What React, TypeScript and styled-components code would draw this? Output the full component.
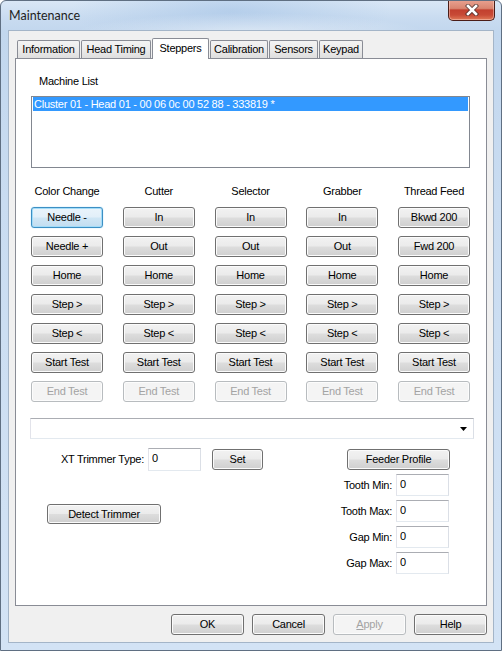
import React from "react";
import styled, { createGlobalStyle, css } from "styled-components";

const GlobalStyle = createGlobalStyle`
  html, body { margin: 0; padding: 0; background: #ffffff; }
  body {
    font-family: "Liberation Sans", Arial, sans-serif;
    font-size: 11px;
    letter-spacing: -0.25px;
    color: #000000;
  }
  * { box-sizing: border-box; }
`;

const Window = styled.div`
  width: 502px;
  height: 651px;
  border: 1px solid #5f6f82;
  border-radius: 6px 6px 0 0;
  overflow: hidden;
  display: flex;
  flex-direction: column;
  background:
    radial-gradient(ellipse 180px 22px at 250px 34px, rgba(255, 255, 255, 0.55), rgba(255, 255, 255, 0) 100%),
    radial-gradient(ellipse 160px 40px at 230px 10px, rgba(150, 185, 225, 0.45), rgba(150, 185, 225, 0) 100%),
    linear-gradient(180deg, #d9e7f6 0px, #c8dbf0 18px, #c2d7ee 30px, #c9dcf1 200px, #d3e3f5 100%);
`;

const TitleBar = styled.div`
  height: 29px;
  flex: none;
  display: flex;
  justify-content: space-between;
  align-items: flex-start;
`;

const Title = styled.div`
  padding: 7px 0 0 8px;
  font-family: "Lato", "Noto Sans", sans-serif;
  font-size: 12.5px;
  letter-spacing: 0;
  line-height: 16px;
  color: #1e1e1e;
`;

const CloseButton = styled.div`
  width: 47px;
  height: 21px;
  margin: -1px 6px 0 0;
  border: 1px solid #4a1d18;
  border-top: none;
  border-radius: 0 0 5px 5px;
  display: flex;
  align-items: center;
  justify-content: center;
  background: linear-gradient(180deg, #e9a291 0%, #d98570 42%, #c2402f 50%, #c84a36 75%, #e07a58 100%);
  box-shadow: inset 0 0 0 1px rgba(255, 220, 210, 0.45);
`;

const Client = styled.div`
  flex: none;
  height: 613px;
  margin: 0 7px;
  border: 1px solid #a4b5c8;
  background: #f0f0f0;
  padding: 7px 6px 7px 6px;
  display: flex;
  flex-direction: column;
`;

const TabStrip = styled.div`
  height: 20px;
  flex: none;
  display: flex;
  align-items: flex-end;
  gap: 1px;
  padding-left: 2px;
  position: relative;
  z-index: 1;
`;

const Tab = styled.div<{ $w: number; $active?: boolean }>`
  width: ${(p) => p.$w}px;
  height: 18px;
  border: 1px solid #898c95;
  border-bottom: none;
  border-radius: 2px 2px 0 0;
  background: linear-gradient(180deg, #f3f3f3 0%, #ebebeb 50%, #dedede 100%);
  display: flex;
  align-items: center;
  justify-content: center;
  line-height: 13px;
  white-space: nowrap;
  ${(p) =>
    p.$active &&
    css`
      height: 21px;
      margin-bottom: -1px;
      background: #ffffff;
      padding-bottom: 2px;
    `}
`;

const Panel = styled.div`
  height: 548px;
  flex: none;
  border: 1px solid #898c95;
  background: #ffffff;
  padding: 16px 16px 0 15px;
  display: flex;
  flex-direction: column;
`;

const ListLabel = styled.div`
  height: 13px;
  line-height: 13px;
  margin-left: 8px;
`;

const ListBox = styled.div`
  margin-top: 8px;
  height: 72px;
  border: 1px solid #828790;
  padding: 0 1px;
  background: #ffffff;
`;

const ListRow = styled.div<{ $selected?: boolean }>`
  height: 14px;
  line-height: 14px;
  padding-left: 1px;
  white-space: nowrap;
  ${(p) =>
    p.$selected &&
    css`
      background: #3399ff;
      color: #ffffff;
    `}
`;

const StepperGrid = styled.div`
  margin-top: 16px;
  display: grid;
  grid-template-columns: repeat(5, 72px);
  grid-template-rows: 15px repeat(7, 21px);
  grid-auto-flow: column;
  justify-content: space-between;
  row-gap: 8px;
`;

const ColumnLabel = styled.div`
  line-height: 15px;
  text-align: center;
  white-space: nowrap;
`;

type Variant = "normal" | "focused" | "disabled";

const Button = styled.div<{ $w?: number; $h?: number; $variant?: Variant }>`
  width: ${(p) => (p.$w ? `${p.$w}px` : "100%")};
  height: ${(p) => p.$h ?? 21}px;
  flex: none;
  border: 1px solid #707070;
  border-radius: 3px;
  background: linear-gradient(180deg, #f2f2f2 0%, #ebebeb 48%, #dddddd 52%, #cfcfcf 100%);
  box-shadow: inset 0 0 0 1px #fbfbfb;
  display: flex;
  align-items: center;
  justify-content: center;
  line-height: 13px;
  white-space: nowrap;
  color: #000000;
  ${(p) =>
    p.$variant === "focused" &&
    css`
      border-color: #3c8fc4;
      background: linear-gradient(180deg, #eaf4fb 0%, #e2eff9 48%, #cfe6f5 52%, #c2ddf0 100%);
      box-shadow: inset 0 0 0 1px #a3dcf8, 0 0 1px #5fc3f2;
    `}
  ${(p) =>
    p.$variant === "disabled" &&
    css`
      border-color: #b8bcbf;
      background: #f4f4f4;
      box-shadow: inset 0 0 0 1px #fcfcfc;
      color: #a3a3a3;
    `}
`;

const Combo = styled.div`
  margin: 16px -4px 0 -1px;
  height: 21px;
  flex: none;
  border: 1px solid;
  border-color: #abadb3 #dbdfe6 #e3e9ef #e2e3ea;
  background: #ffffff;
  display: flex;
  align-items: center;
  justify-content: flex-end;
  padding-right: 6px;
`;

const Lower = styled.div`
  margin-top: 9px;
  display: flex;
  justify-content: space-between;
  align-items: flex-start;
`;

const LeftCol = styled.div`
  display: flex;
  flex-direction: column;
`;

const XTRow = styled.div`
  display: flex;
  align-items: center;
`;

const XTLabel = styled.div`
  width: 113px;
  text-align: right;
  margin-right: 4px;
  white-space: nowrap;
  padding-bottom: 2px;
`;

const TextBox = styled.input<{ $h?: number }>`
  width: 53px;
  height: ${(p) => p.$h ?? 22}px;
  flex: none;
  border: 1px solid;
  border-color: #abadb3 #dbdfe6 #e3e9ef #e2e3ea;
  background: #ffffff;
  font: inherit;
  letter-spacing: inherit;
  color: #000000;
  padding: 0 3px 3px 3px;
  margin: 0;
  outline: none;
`;

const SetButton = styled(Button)`
  margin-left: 11px;
`;

const DetectButton = styled(Button)`
  margin: 33px 0 0 16px;
`;

const RightCol = styled.div`
  display: flex;
  flex-direction: column;
  align-items: flex-end;
  gap: 4px;
  padding-top: 1px;
  margin-right: 20px;
`;

const FieldRow = styled.div`
  display: flex;
  align-items: center;
  gap: 4px;
  margin-right: 1px;
`;

const FieldLabel = styled.div`
  white-space: nowrap;
  padding-bottom: 1px;
`;

const BottomBar = styled.div`
  margin-top: 8px;
  display: flex;
  justify-content: flex-end;
  gap: 8px;
`;

const Mnemonic = styled.span`
  text-decoration: underline;
`;

const columns: { title: string; buttons: string[] }[] = [
  { title: "Color Change", buttons: ["Needle -", "Needle +", "Home", "Step >", "Step <", "Start Test", "End Test"] },
  { title: "Cutter", buttons: ["In", "Out", "Home", "Step >", "Step <", "Start Test", "End Test"] },
  { title: "Selector", buttons: ["In", "Out", "Home", "Step >", "Step <", "Start Test", "End Test"] },
  { title: "Grabber", buttons: ["In", "Out", "Home", "Step >", "Step <", "Start Test", "End Test"] },
  { title: "Thread Feed", buttons: ["Bkwd 200", "Fwd 200", "Home", "Step >", "Step <", "Start Test", "End Test"] },
];

const tabs: { label: string; w: number; active?: boolean }[] = [
  { label: "Information", w: 63 },
  { label: "Head Timing", w: 70 },
  { label: "Steppers", w: 57, active: true },
  { label: "Calibration", w: 58 },
  { label: "Sensors", w: 49 },
  { label: "Keypad", w: 44 },
];

const fields = ["Tooth Min:", "Tooth Max:", "Gap Min:", "Gap Max:"];

export default function App() {
  return (
    <>
      <GlobalStyle />
      <Window>
        <TitleBar>
          <Title>Maintenance</Title>
          <CloseButton>
            <svg width="14" height="12" viewBox="0 0 14 12">
              <path d="M3 2 L11 10 M11 2 L3 10" stroke="#3a2a2a" strokeWidth="4.4" strokeLinecap="square" opacity="0.75" />
              <path d="M3 2 L11 10 M11 2 L3 10" stroke="#ffffff" strokeWidth="2.6" strokeLinecap="square" />
            </svg>
          </CloseButton>
        </TitleBar>
        <Client>
          <TabStrip>
            {tabs.map((t) => (
              <Tab key={t.label} $w={t.w} $active={t.active}>
                {t.label}
              </Tab>
            ))}
          </TabStrip>
          <Panel>
            <ListLabel>Machine List</ListLabel>
            <ListBox>
              <ListRow $selected>Cluster 01 - Head 01 - 00 06 0c 00 52 88 - 333819 *</ListRow>
            </ListBox>
            <StepperGrid>
              {columns.map((c, ci) => (
                <React.Fragment key={c.title}>
                  <ColumnLabel>{c.title}</ColumnLabel>
                  {c.buttons.map((b, bi) => (
                    <Button
                      key={b + bi}
                      $variant={bi === 6 ? "disabled" : ci === 0 && bi === 0 ? "focused" : "normal"}
                    >
                      {b}
                    </Button>
                  ))}
                </React.Fragment>
              ))}
            </StepperGrid>
            <Combo>
              <svg width="7" height="4" viewBox="0 0 7 4">
                <path d="M0 0 H7 L3.5 4 Z" fill="#000000" />
              </svg>
            </Combo>
            <Lower>
              <LeftCol>
                <XTRow>
                  <XTLabel>XT Trimmer Type:</XTLabel>
                  <TextBox $h={23} readOnly value="0" />
                  <SetButton $w={51}>Set</SetButton>
                </XTRow>
                <DetectButton $w={114} $h={20}>
                  Detect Trimmer
                </DetectButton>
              </LeftCol>
              <RightCol>
                <Button $w={103}>Feeder Profile</Button>
                {fields.map((f) => (
                  <FieldRow key={f}>
                    <FieldLabel>{f}</FieldLabel>
                    <TextBox readOnly value="0" />
                  </FieldRow>
                ))}
              </RightCol>
            </Lower>
          </Panel>
          <BottomBar>
            <Button $w={73}>OK</Button>
            <Button $w={73}>Cancel</Button>
            <Button $w={73} $variant="disabled">
              <Mnemonic>A</Mnemonic>pply
            </Button>
            <Button $w={73}>Help</Button>
          </BottomBar>
        </Client>
      </Window>
    </>
  );
}
